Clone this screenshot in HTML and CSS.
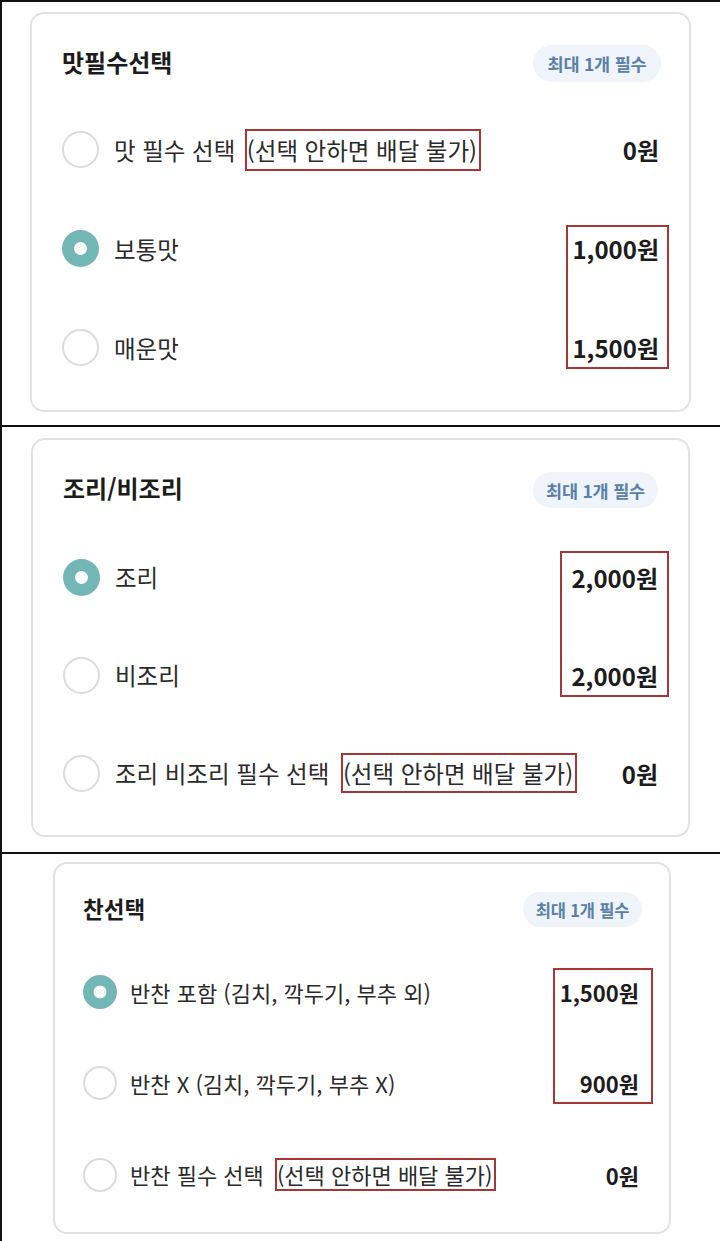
FILE: index.html
```html
<!DOCTYPE html>
<html lang="ko">
<head>
<meta charset="utf-8">
<title>옵션 선택</title>
<link rel="stylesheet" href="styles.css">
</head>
<body>
<div class="sheet">
  <section class="panel panel-1">
    <div class="card">
      <div class="card-head">
        <h2 class="card-title">맛필수선택</h2>
        <span class="badge">최대 1개 필수</span>
      </div>
      <ul class="options">
        <li class="option">
          <span class="radio"></span>
          <span class="label">맛 필수 선택 <span class="mark">(선택 안하면 배달 불가)</span></span>
          <span class="price">0원</span>
        </li>
        <li class="option">
          <span class="radio is-checked"></span>
          <span class="label">보통맛</span>
          <span class="price">1,000원</span>
        </li>
        <li class="option">
          <span class="radio"></span>
          <span class="label">매운맛</span>
          <span class="price">1,500원</span>
        </li>
      </ul>
      <div class="price-mark"></div>
    </div>
  </section>

  <section class="panel panel-2">
    <div class="card">
      <div class="card-head">
        <h2 class="card-title">조리/비조리</h2>
        <span class="badge">최대 1개 필수</span>
      </div>
      <ul class="options">
        <li class="option">
          <span class="radio is-checked"></span>
          <span class="label">조리</span>
          <span class="price">2,000원</span>
        </li>
        <li class="option">
          <span class="radio"></span>
          <span class="label">비조리</span>
          <span class="price">2,000원</span>
        </li>
        <li class="option">
          <span class="radio"></span>
          <span class="label">조리 비조리 필수 선택 <span class="mark">(선택 안하면 배달 불가)</span></span>
          <span class="price">0원</span>
        </li>
      </ul>
      <div class="price-mark"></div>
    </div>
  </section>

  <section class="panel panel-3">
    <div class="card">
      <div class="card-head">
        <h2 class="card-title">찬선택</h2>
        <span class="badge">최대 1개 필수</span>
      </div>
      <ul class="options">
        <li class="option">
          <span class="radio is-checked"></span>
          <span class="label">반찬 포함 (김치, 깍두기, 부추 외)</span>
          <span class="price">1,500원</span>
        </li>
        <li class="option">
          <span class="radio"></span>
          <span class="label">반찬 X (김치, 깍두기, 부추 X)</span>
          <span class="price">900원</span>
        </li>
        <li class="option">
          <span class="radio"></span>
          <span class="label">반찬 필수 선택 <span class="mark">(선택 안하면 배달 불가)</span></span>
          <span class="price">0원</span>
        </li>
      </ul>
      <div class="price-mark"></div>
    </div>
  </section>
</div>
</body>
</html>
```

FILE: styles.css
```css
* { box-sizing: border-box; }

html, body {
  margin: 0;
  padding: 0;
  background: #ffffff;
}

body {
  font-family: "Noto Sans CJK KR", "Noto Sans", sans-serif;
  color: #222222;
}

.sheet {
  width: 720px;
  height: 1241px;
  border-left: 2px solid #111111;
  overflow: hidden;
}

.panel {
  border-top: 2px solid #111111;
}

.card {
  position: relative;
  background: #ffffff;
  border: 2px solid #e2e2e2;
  border-radius: 14px;
  padding: var(--pad-top) var(--pad-right) var(--pad-bottom) var(--pad-left);
}

.card-head {
  display: flex;
  align-items: center;
  justify-content: space-between;
  height: var(--badge-h);
}

.card-title {
  margin: 0;
  font-size: var(--title-fs);
  line-height: 1;
  font-weight: 700;
  color: #1c1c1c;
  position: relative;
  top: var(--title-shift);
}

.badge {
  display: flex;
  align-items: center;
  justify-content: center;
  height: var(--badge-h);
  width: var(--badge-w);
  margin-right: var(--badge-shift);
  border-radius: 20px;
  background: #eef4fa;
  color: #5a80a8;
  font-size: var(--badge-fs);
  font-weight: 700;
  letter-spacing: -0.2px;
}

.options {
  list-style: none;
  margin: var(--list-gap) 0 0;
  padding: 0;
}

.option {
  display: flex;
  align-items: center;
  height: var(--row-h);
}

.radio {
  flex: none;
  width: var(--radio);
  height: var(--radio);
  border-radius: 50%;
  border: 2px solid #dcdcdc;
  margin-right: var(--radio-gap);
  background: #ffffff;
}

.radio.is-checked {
  border: none;
  background: radial-gradient(circle, #ffffff 0, #ffffff 6px, #72b7b5 6.8px);
}

.label {
  flex: 1;
  font-size: var(--fs);
  color: #2a2a2a;
  white-space: nowrap;
}

.mark {
  display: inline-block;
  border: 2px solid #a93636;
  line-height: var(--mark-lh);
  margin-left: var(--mark-shift);
  padding: 0 2px 0 0;
}

.price {
  flex: none;
  font-size: var(--price-fs);
  font-weight: 700;
  color: #1c1c1c;
}

.price-mark {
  position: absolute;
  border: 2px solid #a93636;
  top: var(--pm-top);
  right: var(--pm-right);
  width: var(--pm-w);
  height: var(--pm-h);
}

/* panel 1 */
.panel-1 {
  height: 425px;
  padding: 10px 29px 0 28px;
}
.panel-1 .card {
  height: 400px;
  --pad-top: 31px;
  --pad-right: 30px;
  --pad-bottom: 13px;
  --pad-left: 30px;
  --badge-h: 37px;
  --badge-w: 128px;
  --badge-shift: -2px;
  --badge-fs: 17.5px;
  --title-fs: 24px;
  --title-shift: -2px;
  --list-gap: 18px;
  --row-h: 99px;
  --radio: 37px;
  --radio-gap: 15px;
  --fs: 23.5px;
  --price-fs: 24px;
  --mark-lh: 38px;
  --mark-shift: 3px;
  --pm-top: 211px;
  --pm-right: 20px;
  --pm-w: 103px;
  --pm-h: 144px;
}

/* panel 2 */
.panel-2 {
  height: 427px;
  padding: 11px 30px 0 29px;
}
.panel-2 .card {
  height: 399px;
  --pad-top: 32px;
  --pad-right: 30px;
  --pad-bottom: 13px;
  --pad-left: 30px;
  --badge-h: 36px;
  --badge-w: 125px;
  --badge-shift: 0px;
  --badge-fs: 17.5px;
  --title-fs: 24px;
  --title-shift: -2px;
  --list-gap: 20px;
  --row-h: 98px;
  --radio: 37px;
  --radio-gap: 15px;
  --fs: 23.5px;
  --price-fs: 24px;
  --mark-lh: 36px;
  --mark-shift: 5px;
  --pm-top: 111px;
  --pm-right: 19px;
  --pm-w: 109px;
  --pm-h: 146px;
}

/* panel 3 */
.panel-3 {
  height: 389px;
  padding: 8px 49px 0 51px;
}
.panel-3 .card {
  height: 372px;
  --pad-top: 28px;
  --pad-right: 30px;
  --pad-bottom: 11px;
  --pad-left: 28px;
  --badge-h: 35px;
  --badge-w: 119px;
  --badge-shift: -3px;
  --badge-fs: 16.5px;
  --title-fs: 22.5px;
  --title-shift: -1px;
  --list-gap: 19px;
  --row-h: 91.5px;
  --radio: 34px;
  --radio-gap: 13px;
  --fs: 22px;
  --price-fs: 22px;
  --mark-lh: 29px;
  --mark-shift: 5px;
  --pm-top: 104px;
  --pm-right: 16px;
  --pm-w: 100px;
  --pm-h: 136px;
}
```
